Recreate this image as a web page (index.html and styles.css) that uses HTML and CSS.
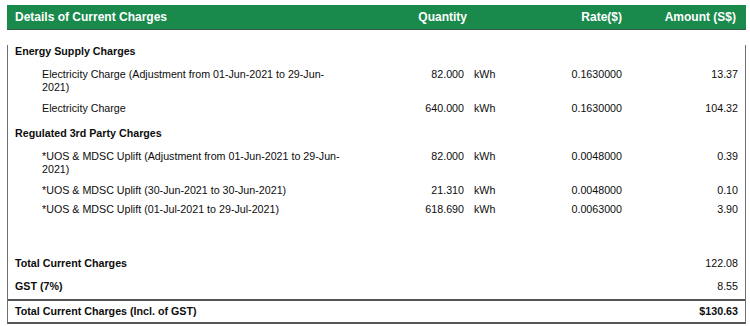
FILE: index.html
```html
<!DOCTYPE html>
<html>
<head>
<meta charset="utf-8">
<link rel="stylesheet" href="styles.css">
</head>
<body>
<div class="charges">
  <div class="row head">
    <div class="c-desc">Details of Current Charges</div>
    <div class="c-qty h-qty">Quantity</div>
    <div class="c-unit"></div>
    <div class="c-rate">Rate($)</div>
    <div class="c-amt">Amount (S$)</div>
  </div>
  <div class="body">
    <div class="row section g15"><div class="c-desc">Energy Supply Charges</div></div>
    <div class="row item g10">
      <div class="c-desc">Electricity Charge (Adjustment from 01-Jun-2021 to 29-Jun-2021)</div>
      <div class="c-qty">82.000</div><div class="c-unit">kWh</div>
      <div class="c-rate">0.1630000</div><div class="c-amt">13.37</div>
    </div>
    <div class="row item g8">
      <div class="c-desc">Electricity Charge</div>
      <div class="c-qty">640.000</div><div class="c-unit">kWh</div>
      <div class="c-rate">0.1630000</div><div class="c-amt">104.32</div>
    </div>
    <div class="row section g12"><div class="c-desc">Regulated 3rd Party Charges</div></div>
    <div class="row item g10">
      <div class="c-desc">*UOS &amp; MDSC Uplift (Adjustment from 01-Jun-2021 to 29-Jun-2021)</div>
      <div class="c-qty">82.000</div><div class="c-unit">kWh</div>
      <div class="c-rate">0.0048000</div><div class="c-amt">0.39</div>
    </div>
    <div class="row item g8">
      <div class="c-desc">*UOS &amp; MDSC Uplift (30-Jun-2021 to 30-Jun-2021)</div>
      <div class="c-qty">21.310</div><div class="c-unit">kWh</div>
      <div class="c-rate">0.0048000</div><div class="c-amt">0.10</div>
    </div>
    <div class="row item g6">
      <div class="c-desc">*UOS &amp; MDSC Uplift (01-Jul-2021 to 29-Jul-2021)</div>
      <div class="c-qty">618.690</div><div class="c-unit">kWh</div>
      <div class="c-rate">0.0063000</div><div class="c-amt">3.90</div>
    </div>
    <div class="row total g41">
      <div class="t-label">Total Current Charges</div>
      <div class="c-amt">122.08</div>
    </div>
    <div class="row total g10 gst">
      <div class="t-label">GST (7%)</div>
      <div class="c-amt">8.55</div>
    </div>
    <div class="row total grand">
      <div class="t-label">Total Current Charges (Incl. of GST)</div>
      <div class="c-amt strong">$130.63</div>
    </div>
  </div>
</div>
</body>
</html>
```

FILE: styles.css
```css
html, body {
  margin: 0;
  padding: 0;
  background: #ffffff;
}
body {
  font-family: "Liberation Sans", Arial, sans-serif;
  color: #0d0d0d;
}
.charges {
  margin: 5px 0 0 7px;
  width: 739px;
  box-sizing: border-box;
}
.row {
  display: grid;
  grid-template-columns: 372px 85px 75px 83px 122px;
  font-size: 10.7px;
  line-height: 13px;
}
.head {
  background: #198a4b;
  color: #ffffff;
  font-weight: bold;
  font-size: 12px;
  line-height: 24px;
  height: 24px;
  border-bottom: 1px solid #3d5a48;
}
.head .c-desc {
  padding-left: 8px;
}
.h-qty {
  justify-self: end;
  margin-right: -3px;
}
.body {
  border-left: 1px solid #6f6f6f;
  border-right: 1px solid #6f6f6f;
  border-bottom: 2px solid #555555;
}
.body .row {
  grid-template-columns: 371px 85px 75px 83px 123px;
}
.section .c-desc {
  font-weight: bold;
  padding-left: 7px;
}
.item .c-desc {
  padding-left: 34px;
  padding-right: 36px;
}
.c-qty { text-align: right; }
.c-unit { padding-left: 10px; }
.c-rate { text-align: right; }
.c-amt { text-align: right; padding-right: 7px; }
.head .c-amt { padding-right: 8px; }
.body .total {
  grid-template-columns: 1fr 123px;
}
.t-label {
  font-weight: bold;
  padding-left: 7px;
}
.strong { font-weight: bold; }
.gst {
  padding-bottom: 6px;
  border-bottom: 2px solid #555555;
}
.grand {
  padding-top: 4px;
  padding-bottom: 4px;
}
.g6 { margin-top: 6px; }
.g8 { margin-top: 8px; }
.g10 { margin-top: 10px; }
.g12 { margin-top: 12px; }
.g15 { margin-top: 15px; }
.g41 { margin-top: 41px; }
```
